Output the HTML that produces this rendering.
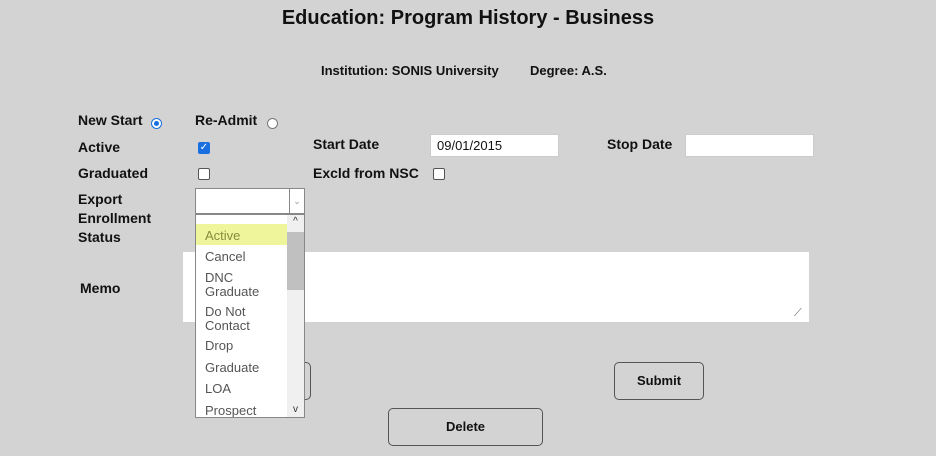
<!DOCTYPE html>
<html><head><style>
body{margin:0;width:936px;height:456px;background:#d3d3d3;font-family:"Liberation Sans",sans-serif;position:relative;overflow:hidden;color:#111}
.a{position:absolute;white-space:nowrap}
.b{font-weight:bold;font-size:14px}
.in{position:absolute;background:#fff;border:1px solid #ccc;box-sizing:border-box;font-size:13px;padding:3px 6px}
.cb{position:absolute;width:10px;height:10px;border:1px solid #555;border-radius:2px;background:#fff}
.btn{position:absolute;border:1px solid #555;border-radius:5px;box-sizing:border-box;font-weight:bold;font-size:13px;text-align:center}
.it{position:absolute;left:9px;font-size:13px;color:#555;line-height:14px}
</style></head><body>
<div class="a" style="left:0;width:936px;text-align:center;top:7px;font-size:20px;font-weight:bold">Education: Program History - Business</div>
<div class="a b" style="left:321px;top:63px;font-size:13px">Institution: SONIS University</div>
<div class="a b" style="left:530px;top:63px;font-size:13px">Degree: A.S.</div>
<div class="a b" style="left:78px;top:112px">New Start</div>
<div class="a" style="left:151px;top:118px;width:9px;height:9px;border:1px solid #1a6fe0;border-radius:50%;background:#fff"><div style="position:absolute;left:2px;top:2px;width:5px;height:5px;border-radius:50%;background:#1a6fe0"></div></div>
<div class="a b" style="left:195px;top:112px">Re-Admit</div>
<div class="a" style="left:267px;top:118px;width:9px;height:9px;border:1px solid #777;border-radius:50%;background:#fff"></div>
<div class="a b" style="left:78px;top:139px">Active</div>
<div class="cb" style="left:198px;top:142px;background:#1a6fe0;border-color:#1a6fe0;color:#fff;font-size:10px;line-height:10px;text-align:center">✓</div>
<div class="a b" style="left:313px;top:136px">Start Date</div>
<div class="in" style="left:430px;top:134px;width:129px;height:23px">09/01/2015</div>
<div class="a b" style="left:607px;top:136px">Stop Date</div>
<div class="in" style="left:685px;top:134px;width:129px;height:23px"></div>
<div class="a b" style="left:78px;top:165px">Graduated</div>
<div class="cb" style="left:198px;top:168px"></div>
<div class="a b" style="left:313px;top:165px">Excld from NSC</div>
<div class="cb" style="left:433px;top:168px"></div>
<div class="a b" style="left:78px;top:190px;line-height:19px;white-space:normal;width:100px">Export<br>Enrollment<br>Status</div>
<div class="a b" style="left:80px;top:280px">Memo</div>
<div class="in" style="left:183px;top:252px;width:626px;height:70px;border:none"></div>
<div class="btn" style="left:240px;top:362px;width:71px;height:38px"></div>
<div class="btn" style="left:614px;top:362px;width:90px;height:38px;line-height:36px">Submit</div>
<div class="btn" style="left:388px;top:408px;width:155px;height:38px;line-height:36px">Delete</div>
<div class="a" style="left:195px;top:188px;width:110px;height:26px;background:#fff;border:1px solid #888;box-sizing:border-box"><div style="position:absolute;right:0;top:0;width:14px;height:24px;border-left:1px solid #888;color:#999;font-size:9px;text-align:center;line-height:24px">⌄</div></div>
<div class="a" style="left:195px;top:214px;width:110px;height:204px;background:#fff;border:1px solid #888;box-sizing:border-box;overflow:hidden">
<div style="position:absolute;left:0;top:9px;width:91px;height:21px;background:#eef59a"></div>
<div class="it" style="top:14px;color:#8a8a40">Active</div>
<div class="it" style="top:35px">Cancel</div>
<div class="it" style="top:56px">DNC<br>Graduate</div>
<div class="it" style="top:90px">Do Not<br>Contact</div>
<div class="it" style="top:124px">Drop</div>
<div class="it" style="top:146px">Graduate</div>
<div class="it" style="top:167px">LOA</div>
<div class="it" style="top:189px">Prospect</div>
<div style="position:absolute;right:0;top:0;width:17px;height:202px;background:#f0f0f0"><div style="position:absolute;left:0;top:17px;width:17px;height:58px;background:#c0c0c0"></div><div style="position:absolute;top:1px;width:17px;text-align:center;font-size:10px;color:#333">^</div><div style="position:absolute;bottom:2px;width:17px;text-align:center;font-size:10px;color:#333">v</div></div>
</div>
<div class="a" style="left:794px;top:307px;font-size:11px;color:#666">⟋</div>
</body></html>
